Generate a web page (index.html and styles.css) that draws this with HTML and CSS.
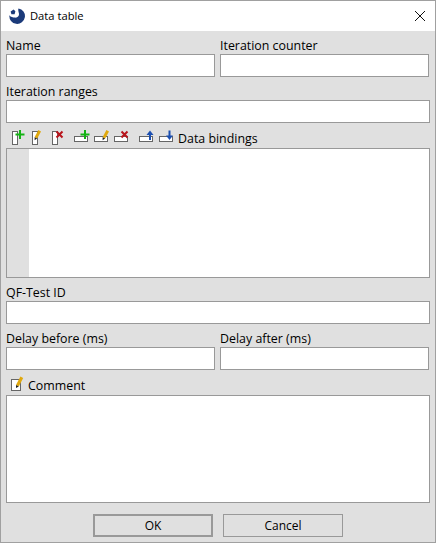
FILE: index.html
```html
<!DOCTYPE html>
<html lang="en">
<head>
    <meta charset="UTF-8">
    <title>Data table</title>
    <link rel="stylesheet" href="styles.css">
</head>
<body>
    <div class="window">
        <div class="titlebar">
            <svg class="app-icon" width="16" height="16" viewBox="0 0 16 16">
                <path fill="#1b3a7a" d="M9.5 0.4A7.8 7.8 0 1 1 0.4 7.2C1.6 9.4 4 9.2 6 9.6 9 10 10.6 7.4 9.8 5 9.4 3.4 8.9 1.8 9.5 0.4Z"/>
                <path fill="#1b3a7a" d="M1.6 3.4 4.6 1.4 6.4 3.2 5.6 6.2 2.4 6.2Z"/>
            </svg>
            <span class="title">Data table</span>
            <svg class="close" width="12" height="12" viewBox="0 0 12 12">
                <path d="M1 1 11 11M11 1 1 11" stroke="#111" stroke-width="1" fill="none"/>
            </svg>
        </div>
        <div class="content">
            <div class="two-col">
                <div class="field">
                    <label>Name</label>
                    <div class="input"></div>
                </div>
                <div class="field">
                    <label>Iteration counter</label>
                    <div class="input"></div>
                </div>
            </div>
            <div class="field">
                <label>Iteration ranges</label>
                <div class="input"></div>
            </div>

            <div class="toolbar">
                <svg class="tool" width="20" height="20" viewBox="0 0 20 20"><use href="#doc"/><use href="#plus"/></svg>
                <svg class="tool" width="20" height="20" viewBox="0 0 20 20"><use href="#doc"/><use href="#pencil"/></svg>
                <svg class="tool" width="20" height="20" viewBox="0 0 20 20"><use href="#doc"/><use href="#cross"/></svg>
                <svg class="tool group" width="20" height="20" viewBox="0 0 20 20"><use href="#row"/><use href="#plus" x="3"/></svg>
                <svg class="tool" width="20" height="20" viewBox="0 0 20 20"><use href="#row"/><use href="#pencil" x="6"/></svg>
                <svg class="tool" width="20" height="20" viewBox="0 0 20 20"><use href="#row"/><use href="#cross" x="3"/></svg>
                <svg class="tool group2" width="20" height="20" viewBox="0 0 20 20"><use href="#row"/><use href="#up"/></svg>
                <svg class="tool" width="20" height="20" viewBox="0 0 20 20"><use href="#row"/><use href="#down"/></svg>
                <span class="toolbar-label">Data bindings</span>
            </div>
            <div class="table">
                <div class="row-header"></div>
            </div>

            <div class="field">
                <label>QF-Test ID</label>
                <div class="input"></div>
            </div>
            <div class="two-col">
                <div class="field">
                    <label>Delay before (ms)</label>
                    <div class="input"></div>
                </div>
                <div class="field">
                    <label>Delay after (ms)</label>
                    <div class="input"></div>
                </div>
            </div>

            <div class="comment-head">
                <svg class="tool" width="16" height="18" viewBox="0 0 16 18">
                    <rect x="0.5" y="5.5" width="9" height="11" fill="#fff" stroke="#666"/>
                    <path d="M5 11 9.4 2.5 12.2 3.9 7.8 12.4Z" fill="#e0a80c"/>
                    <path d="M5 11 7.8 12.4 5 14Z" fill="#222"/>
                </svg>
                <span>Comment</span>
            </div>
            <div class="textarea"></div>

            <div class="buttons">
                <button type="button" class="btn default">OK</button>
                <button type="button" class="btn">Cancel</button>
            </div>
        </div>
    </div>

    <svg class="defs" width="0" height="0">
        <defs>
            <rect id="doc" x="2.5" y="5.5" width="5" height="13" fill="#fff" stroke="#666"/>
            <rect id="row" x="2.5" y="10.5" width="13" height="5" fill="#fff" stroke="#666"/>
            <path id="plus" d="M10 4V13M5.5 8.5H14.5" stroke="#14b314" stroke-width="2" fill="none"/>
            <g id="pencil">
                <path d="M4.6 11.2 8.4 4 11 5.4 7.2 12.6Z" fill="#e0a80c"/>
                <path d="M4.6 11.2 7.2 12.6 4.6 14.2Z" fill="#222"/>
            </g>
            <path id="cross" d="M6.5 5.5 12.5 11.5M12.5 5.5 6.5 11.5" stroke="#b8141c" stroke-width="2" fill="none"/>
            <g id="up" fill="#1c4fb0">
                <path d="M13 4.5 16.5 9H9.5Z"/>
                <rect x="12" y="8" width="2" height="6"/>
            </g>
            <g id="down" fill="#1c4fb0">
                <path d="M12.5 14 16 9.5H9Z"/>
                <rect x="11.5" y="4.5" width="2" height="6"/>
            </g>
        </defs>
    </svg>
</body>
</html>
```

FILE: styles.css
```css
*{
    margin: 0px;
    padding: 0px;
    box-sizing: border-box;
}

body{
    font-family: "Open Sans", "Noto Sans", sans-serif;
    font-size: 12.4px;
    color: #000;
    background: #e0e0e0;
    overflow: hidden;
}

.window{
    width: 436px;
    height: 543px;
    border: 1px solid #a0a0a0;
    display: flex;
    flex-direction: column;
}

.titlebar{
    height: 30px;
    flex: none;
    background: #fff;
    display: flex;
    align-items: center;
    padding-left: 8px;
    padding-right: 9px;
}

.app-icon{
    margin-right: 5px;
}

.title{
    flex: 1;
    font-size: 11.2px;
    padding-bottom: 2px;
}

.content{
    flex: 1;
    padding: 0px 5px;
    display: flex;
    flex-direction: column;
}

.two-col{
    display: grid;
    grid-template-columns: 209px 209px;
    column-gap: 5px;
}

.field label{
    display: block;
    height: 23px;
    line-height: 29px;
}

.input{
    height: 23px;
    background: #fff;
    border: 1px solid #999;
}

.toolbar{
    height: 25px;
    display: flex;
    align-items: center;
    padding-left: 4px;
}

.tool{
    flex: none;
}

.group{
    margin-left: 2px;
}

.group2{
    margin-left: 5px;
}

.toolbar-label{
    margin-left: 1px;
    padding-top: 6px;
}

.table{
    height: 130px;
    flex: none;
    background: #fff;
    border: 1px solid #999;
}

.row-header{
    width: 22px;
    height: 100%;
    background: #e0e0e0;
}

.comment-head{
    height: 25px;
    display: flex;
    align-items: center;
    padding-left: 5px;
    gap: 1px;
}

.comment-head span{
    padding-top: 6px;
}

.textarea{
    height: 108px;
    flex: none;
    background: #fff;
    border: 1px solid #999;
}

.buttons{
    display: flex;
    justify-content: center;
    gap: 10px;
    margin-top: 11px;
}

.btn{
    width: 120px;
    height: 23px;
    background: #e0e0e0;
    border: 1px solid #999;
    font-family: inherit;
    font-size: 12px;
    color: #000;
}

.default{
    border: 2px solid #999;
}

.defs{
    position: absolute;
}
```
